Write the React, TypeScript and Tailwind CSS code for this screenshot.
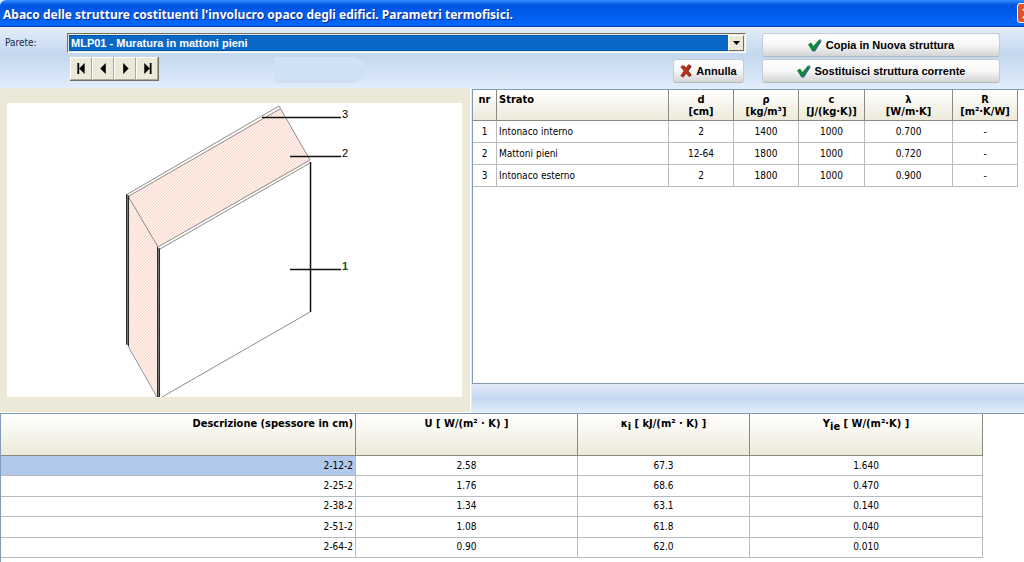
import React, { useState } from 'react';

const structures = ['MLP01 - Muratura in mattoni pieni'];

const layers = [
  { nr: 1, name: 'Intonaco interno', d: '2', rho: '1400', c: '1000', lambda: '0.700', r: '-' },
  { nr: 2, name: 'Mattoni pieni', d: '12-64', rho: '1800', c: '1000', lambda: '0.720', r: '-' },
  { nr: 3, name: 'Intonaco esterno', d: '2', rho: '1800', c: '1000', lambda: '0.900', r: '-' }
];

const variants = [
  { name: '2-12-2', u: '2.58', k: '67.3', y: '1.640' },
  { name: '2-25-2', u: '1.76', k: '68.6', y: '0.470' },
  { name: '2-38-2', u: '1.34', k: '63.1', y: '0.140' },
  { name: '2-51-2', u: '1.08', k: '61.8', y: '0.040' },
  { name: '2-64-2', u: '0.90', k: '62.0', y: '0.010' }
];

const navButtons = [
  { label: 'Primo', path: 'M7 5h2v12H7zM15 5v12l-6-6z' },
  { label: 'Precedente', path: 'M14 5v12l-6-6z' },
  { label: 'Successivo', path: 'M9 5v12l6-6z' },
  { label: 'Ultimo', path: 'M8 5v12l6-6zM14 5h2v12h-2z' }
];

function CheckIcon() {
  return (
    <svg viewBox="0 0 14 13" className="w-[14px] h-[13px] shrink-0" aria-hidden="true">
      <path d="M1.500 7L4 5.500L6 8L11.500 1.500L14 1.500L7 12.500H4.500z" fill="#2a5f9e" />
      <path d="M0 5.500L3 3.500L5.500 7L10.500 1L13 0L6.500 11.500H4z" fill="#128a38" />
    </svg>
  );
}

function CrossIcon() {
  return (
    <svg viewBox="0 0 12 14" className="w-3 h-[14px] shrink-0" aria-hidden="true">
      <path d="M3 2.500L10.500 12M10.500 1.500L2 12.500" stroke="#5e1a12" strokeWidth="3" fill="none" />
      <path d="M1.500 2L9.500 11.500M9.500 1L1.500 12.500" stroke="#b8321c" strokeWidth="3" fill="none" />
    </svg>
  );
}

function ActionButton({ children, className = '' }: { children: React.ReactNode; className?: string }) {
  return (
    <button
      type="button"
      className={`flex h-6 items-center justify-center rounded-[3px] border border-[#c6ccd2] border-b-[#b4b9be] bg-linear-to-b from-white via-[#f7f7f7] to-[#d3d4d6] font-['Liberation_Sans',sans-serif] text-[11px] font-bold text-black ${className}`}
    >
      {children}
    </button>
  );
}

function TitleBar() {
  return (
    <header className="flex h-[27px] items-center justify-between overflow-hidden rounded-tl-md bg-linear-to-b from-[#2f8dff] via-[#0054e3] via-20% to-[#0468fb] border-b border-[#0a3fc4]">
      <h1 className="pl-[3px] pt-1 whitespace-nowrap font-['Noto_Sans','Open_Sans',sans-serif] text-[12px] font-bold text-white [text-shadow:1px_1px_#0a2a8c]">
        Abaco delle strutture costituenti l'involucro opaco degli edifici. Parametri termofisici.
      </h1>
      <button
        type="button"
        aria-label="Chiudi"
        className="-mr-[14px] flex h-[20px] w-[21px] shrink-0 items-center justify-center rounded-[3px] border border-white bg-[#e0532d]"
      >
        <svg viewBox="0 0 13 13" className="size-[13px]" aria-hidden="true">
          <path d="M2 2l9 9M11 2l-9 9" stroke="white" strokeWidth="2" />
        </svg>
      </button>
    </header>
  );
}

function Toolbar() {
  const [structure, setStructure] = useState(structures[0]);

  return (
    <div className="flex h-[61px] bg-linear-to-b from-[#e4eefa] via-[#c3d8ee] via-45% to-[#e0edfc] pt-[6px] pr-[24px] pl-[5px]">
      <label htmlFor="parete" className="w-[62px] pt-[2px] text-[10px] text-[#1a2a50]">
        Parete:
      </label>
      <div className="min-w-0 flex-1">
        <div className="flex h-5 border border-[#716f64] border-r-white border-b-white bg-[#ece9d8] p-px">
          <div className="relative flex flex-1">
            <select
              id="parete"
              value={structure}
              onChange={e => setStructure(e.target.value)}
              className="h-full w-full appearance-none border border-dotted border-[#123a66] bg-[#0a68c6] pl-px font-['Liberation_Sans',sans-serif] text-[11px] leading-[14px] font-bold text-white outline-none"
            >
              {structures.map(s => (
                <option key={s}>{s}</option>
              ))}
            </select>
            <span className="pointer-events-none absolute inset-y-0 right-0 flex w-4 items-center justify-center border border-white border-r-[#716f64] border-b-[#716f64] bg-[#ece9d8]">
              <svg viewBox="0 0 7 4" className="h-1 w-[7px]" aria-hidden="true">
                <path d="M0 0h7L3.5 4z" />
              </svg>
            </span>
          </div>
        </div>
        <div className="flex items-start pt-1 pr-[2px] pl-[3px]">
          <div className="flex border-r border-b border-[#716f64]">
            {navButtons.map(b => (
              <button
                key={b.label}
                type="button"
                aria-label={b.label}
                className="h-[23px] border border-white border-r-[#aca899] border-b-[#aca899] bg-[#ece9d8]"
              >
                <svg viewBox="0 0 22 22" className="h-[21px] w-5" aria-hidden="true">
                  <path d={b.path} />
                </svg>
              </button>
            ))}
          </div>
          <div className="ml-[116px] h-[26px] w-[90px] rounded-r-full rounded-l-md bg-linear-to-b from-[#d3e3f6] to-[#cfe0f4]" />
          <ActionButton className="mt-[2px] ml-auto w-[71px] gap-1">
            <CrossIcon />
            Annulla
          </ActionButton>
        </div>
      </div>
      <div className="ml-4 flex w-[238px] flex-col gap-[2px]">
        <ActionButton className="gap-1">
          <CheckIcon />
          Copia in Nuova struttura
        </ActionButton>
        <ActionButton className="gap-1">
          <CheckIcon />
          Sostituisci struttura corrente
        </ActionButton>
      </div>
    </div>
  );
}

function WallDrawing() {
  return (
    <svg viewBox="7 103 455 294" className="h-[294px] w-full bg-white" role="img" aria-label="Stratigrafia della parete">
      <defs>
        <pattern id="brick" width="3" height="3" patternUnits="userSpaceOnUse">
          <rect width="3" height="3" fill="#fef0e8" />
          <path d="M0 3L3 0" stroke="#f8d6c8" strokeWidth="1" />
        </pattern>
      </defs>
      <path d="M129 196L280 108L310 161L158 247L158 397L129 346z" fill="url(#brick)" />
      <g fill="none" stroke="#8e8a8a" strokeWidth="1">
        <path d="M126 195L279 106L310 160" />
        <path d="M129 196L280 109" />
        <path d="M128 196L158 247L310 160" />
        <path d="M160 249L310 163" />
        <path d="M128 346L157 397" />
        <path d="M162 397L310 312" />
      </g>
      <path d="M127.500 195V345M158.500 248V397" stroke="#777" strokeWidth="3" />
      <path d="M126.500 194V344M128.500 196V346M157.500 247V397M159.500 249V397" stroke="#2c2c2c" strokeWidth="1" />
      <path d="M310.500 162V312" stroke="#111" strokeWidth="1.500" />
      <path d="M262 117.500H341M290 156.500H341M290 269.500H341" stroke="#111" strokeWidth="1.500" />
      <g className="font-['Liberation_Sans',sans-serif] text-[11px]">
        <text x="342" y="118">3</text>
        <text x="342" y="157">2</text>
        <text x="342" y="270" fill="#14532d" fontWeight="bold">1</text>
      </g>
    </svg>
  );
}

function LayersTable() {
  const head = 'border-r border-b border-[#8a8a80] align-top text-[11px] leading-[12px] pt-1';
  const cell = 'border-r border-b border-[#b8bcc0] h-[22px] text-center';

  return (
    <div className="h-[295px] border-t border-b border-l border-[#7f9db9] bg-white pr-[6px]">
      <table className="w-full table-fixed border-separate border-spacing-0 text-[10px] leading-[14px]">
        <colgroup>
          <col className="w-[24px]" />
          <col />
          <col className="w-[65px]" />
          <col className="w-[65px]" />
          <col className="w-[66px]" />
          <col className="w-[88px]" />
          <col className="w-[65px]" />
        </colgroup>
        <thead>
          <tr className="h-[31px] bg-linear-to-b from-white to-[#ece9d8]">
            <th className={head}>nr</th>
            <th className={`${head} pl-[2px] text-left`}>Strato</th>
            <th className={head}>d<br />[cm]</th>
            <th className={head}>ρ<br />[kg/m³]</th>
            <th className={head}>c<br />[J/(kg·K)]</th>
            <th className={head}>λ<br />[W/m·K]</th>
            <th className={head}>R<br />[m²·K/W]</th>
          </tr>
        </thead>
        <tbody>
          {layers.map(layer => (
            <tr key={layer.nr}>
              <td className={cell}>{layer.nr}</td>
              <td className="h-[22px] border-r border-b border-[#b8bcc0] pl-[2px] text-left">{layer.name}</td>
              <td className={cell}>{layer.d}</td>
              <td className={cell}>{layer.rho}</td>
              <td className={cell}>{layer.c}</td>
              <td className={cell}>{layer.lambda}</td>
              <td className={cell}>{layer.r}</td>
            </tr>
          ))}
        </tbody>
      </table>
    </div>
  );
}

function VariantsTable() {
  const [selected, setSelected] = useState(0);
  const head = 'border-r border-b border-[#8a8a80] align-top text-[11px] pt-[3px]';
  const cell = 'border-r border-b border-[#b8bcc0] text-center';

  return (
    <div className="flex-1 border-t border-l border-[#7f9db9] bg-white pr-[41px]">
      <table className="h-[144px] w-full table-fixed border-separate border-spacing-0 text-[10px] leading-[14px]">
        <colgroup>
          <col />
          <col className="w-[222px]" />
          <col className="w-[172px]" />
          <col className="w-[233px]" />
        </colgroup>
        <thead>
          <tr className="h-[42px] bg-linear-to-b from-white to-[#ece9d8]">
            <th className={`${head} pr-[2px] text-right`}>Descrizione (spessore in cm)</th>
            <th className={head}>U [ W/(m² · K) ]</th>
            <th className={head}>κ<sub className="text-[11px]">i</sub> [ kJ/(m² · K) ]</th>
            <th className={head}>Y<sub className="text-[11px]">ie</sub> [ W/(m²·K) ]</th>
          </tr>
        </thead>
        <tbody>
          {variants.map((v, i) => (
            <tr key={v.name} onClick={() => setSelected(i)}>
              <td className={`border-r border-b border-[#b8bcc0] pr-[2px] text-right ${i === selected ? 'bg-[#b1c8eb]' : ''}`}>
                {v.name}
              </td>
              <td className={cell}>{v.u}</td>
              <td className={cell}>{v.k}</td>
              <td className={cell}>{v.y}</td>
            </tr>
          ))}
        </tbody>
      </table>
    </div>
  );
}

function App() {
  return (
    <div className="flex min-h-screen flex-col overflow-hidden bg-[#e0edfc] font-['DejaVu_Sans_Condensed','DejaVu_Sans',sans-serif] text-black">
      <TitleBar />
      <Toolbar />
      <main className="flex flex-1 flex-col">
        <div className="flex">
          <section className="w-[46%] border-r border-b border-white bg-[#ece9d8] pt-[15px] pr-2 pb-[15px] pl-[7px]">
            <WallDrawing />
          </section>
          <section className="flex min-w-0 flex-1 flex-col pt-px pl-px">
            <LayersTable />
            <div className="flex-1 bg-linear-to-b from-[#e3ecf8] via-[#c3d8f0] to-[#e3eefb]" />
          </section>
        </div>
        <VariantsTable />
      </main>
    </div>
  );
}

export default App;
